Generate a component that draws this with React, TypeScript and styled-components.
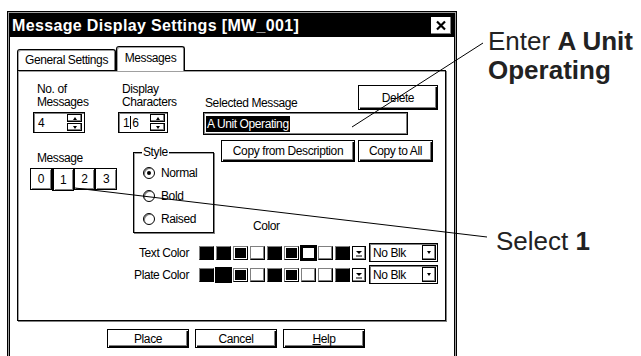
import React from "react";
import styled, { createGlobalStyle, css } from "styled-components";

const GlobalStyle = createGlobalStyle`
  html, body { margin: 0; padding: 0; background: #fff; }
  body { font-family: "Liberation Sans", Arial, sans-serif; }
  * { box-sizing: border-box; }
`;

const Page = styled.div`
  position: relative;
  width: 641px;
  height: 356px;
  overflow: hidden;
  display: flex;
  align-items: flex-start;
  background: #fff;
  color: #000;
`;

const Dialog = styled.div`
  width: 450px;
  height: 360px;
  margin: 11px 0 0 7px;
  border: 1px solid #000;
  box-shadow: inset 0 0 0 1px #a0a0a0, inset 0 0 0 2px #000;
  padding: 2px;
  display: flex;
  flex-direction: column;
  font-family: "Liberation Sans", Arial, sans-serif;
  font-size: 12px;
  letter-spacing: -0.4px;
  background: #fff;
`;

const TitleBar = styled.div`
  height: 23px;
  background: #000;
  display: flex;
  align-items: center;
  justify-content: space-between;
  padding: 0 2px;
`;

const TitleText = styled.span`
  color: #fff;
  font-size: 16px;
  font-weight: bold;
  letter-spacing: 0.35px;
  white-space: nowrap;
`;

const CloseBox = styled.div`
  width: 22px;
  height: 19px;
  background: #fff;
  border: 1px solid #000;
  box-shadow: inset -1px -1px 0 #808080;
  display: flex;
  align-items: center;
  justify-content: center;
`;

const Body = styled.div`
  display: flex;
  flex-direction: column;
  padding: 9px 8px 0 7px;
`;

const TabStrip = styled.div`
  display: flex;
  align-items: flex-end;
  height: 25px;
  margin-bottom: -1px;
  position: relative;
  z-index: 1;
`;

const Tab = styled.div<{ $active?: boolean; $width: number }>`
  width: ${(p) => p.$width}px;
  border: 1px solid #000;
  border-bottom: none;
  border-radius: 3px 3px 0 0;
  background: #fff;
  box-shadow: inset 1px 1px 0 #a0a0a0, inset -1px 0 0 #808080;
  display: flex;
  align-items: center;
  justify-content: center;
  white-space: nowrap;
  ${(p) =>
    p.$active
      ? css`
          height: 25px;
          padding-bottom: 3px;
        `
      : css`
          height: 21px;
          margin-bottom: 1px;
        `}
`;

const Panel = styled.div`
  height: 251px;
  border: 1px solid #000;
  box-shadow: inset 1px 1px 0 #a0a0a0, 1px 1px 0 #808080;
  padding: 12px 0 0 12px;
  display: flex;
  flex-direction: column;
`;

const TopRow = styled.div`
  display: flex;
  align-items: flex-start;
  padding-left: 3px;
`;

const SpinField = styled.div<{ $width: number; $gap: number }>`
  width: ${(p) => p.$width}px;
  margin-right: ${(p) => p.$gap}px;
  display: flex;
  flex-direction: column;
`;

const FieldLabel = styled.div`
  padding-left: 4px;
  line-height: 13px;
  height: 29px;
  white-space: nowrap;
`;

const SpinBox = styled.div`
  height: 21px;
  border: 1px solid #000;
  box-shadow: inset 1px 1px 0 #808080;
  display: flex;
  align-items: center;
  justify-content: space-between;
  padding: 0 2px 0 4px;
`;

const SpinValue = styled.span`
  display: flex;
  align-items: center;
`;

const Caret = styled.span`
  display: inline-block;
  width: 1px;
  height: 13px;
  background: #000;
  margin: 0 1px;
`;

const SpinButtons = styled.div`
  display: flex;
  flex-direction: column;
  gap: 1px;
`;

const SpinBtn = styled.div<{ $down?: boolean }>`
  width: 15px;
  height: 8px;
  border: 1px solid #000;
  box-shadow: inset -1px -1px 0 #808080;
  display: flex;
  align-items: center;
  justify-content: center;
  &::after {
    content: "";
    border-left: 2.5px solid transparent;
    border-right: 2.5px solid transparent;
    ${(p) =>
      p.$down
        ? css`border-top: 3px solid #000;`
        : css`border-bottom: 3px solid #000;`}
  }
`;

const MessageCol = styled.div`
  width: 235px;
  margin-top: 2px;
  display: flex;
  flex-direction: column;
`;

const MsgHeader = styled.div`
  display: flex;
  justify-content: space-between;
  align-items: flex-start;
  height: 27px;
`;

const HeaderLabel = styled.div`
  padding: 11px 0 0 2px;
  white-space: nowrap;
`;

const Button = styled.div<{ $w: number; $h: number }>`
  width: ${(p) => p.$w}px;
  height: ${(p) => p.$h}px;
  border: 1px solid #000;
  box-shadow: inset 1px 1px 0 #fff, inset -1px -1px 0 #000, inset -2px -2px 0 #808080;
  background: #fff;
  display: flex;
  align-items: center;
  justify-content: center;
  white-space: nowrap;
`;

const TextField = styled.div`
  width: 205px;
  height: 23px;
  border: 1px solid #000;
  box-shadow: inset 1px 1px 0 #808080, inset -1px -1px 0 #808080;
  padding-left: 2px;
  display: flex;
  align-items: center;
`;

const Selection = styled.span`
  background: #000;
  color: #fff;
  padding: 1px 1px;
  line-height: 14px;
  white-space: nowrap;
`;

const SecondRow = styled.div`
  display: flex;
  align-items: flex-start;
  margin-top: 5px;
`;

const MessagePicker = styled.div`
  width: 87px;
  margin: 12px 16px 0 0;
  display: flex;
  flex-direction: column;
`;

const PickerLabel = styled.div`
  padding-left: 7px;
  height: 16px;
  line-height: 12px;
`;

const IndexTabs = styled.div`
  display: flex;
  align-items: flex-start;
`;

const IndexTab = styled.div<{ $selected?: boolean }>`
  width: 22px;
  height: ${(p) => (p.$selected ? 23 : 22)}px;
  border: 1px solid #000;
  border-left-width: ${(p) => (p.$selected ? 2 : 1)}px;
  box-shadow: inset 1px 1px 0 #fff, inset -1px -1px 0 #808080;
  display: flex;
  align-items: center;
  justify-content: center;
`;

const StyleGroup = styled.div`
  position: relative;
  width: 81px;
  height: 81px;
  margin-top: 12px;
  border: 1px solid #000;
  box-shadow: inset 1px 1px 0 #a0a0a0, 1px 1px 0 #808080;
`;

const Legend = styled.span`
  position: absolute;
  top: -7px;
  left: 8px;
  background: #fff;
  padding: 0 1px;
  line-height: 13px;
`;

const RadioList = styled.div`
  display: flex;
  flex-direction: column;
  gap: 11px;
  padding: 14px 0 0 9px;
`;

const RadioItem = styled.div`
  display: flex;
  align-items: center;
  gap: 6px;
  height: 12px;
`;

const RadioDot = styled.span<{ $on?: boolean }>`
  position: relative;
  width: 12px;
  height: 12px;
  border-radius: 50%;
  border: 1.5px solid #000;
  box-shadow: inset 1px 1px 0 #808080;
  flex: none;
  ${(p) =>
    p.$on &&
    css`
      &::after {
        content: "";
        position: absolute;
        left: 2.5px;
        top: 2.5px;
        width: 4px;
        height: 4px;
        border-radius: 50%;
        background: #000;
      }
    `}
`;

const RightCol = styled.div`
  width: 224px;
  height: 93px;
  display: flex;
  flex-direction: column;
`;

const CopyRow = styled.div`
  display: flex;
  gap: 3px;
  padding-left: 7px;
`;

const ColorTitle = styled.div`
  margin-top: auto;
  padding: 0 0 1px 39px;
  line-height: 12px;
`;

const ColorSection = styled.div`
  display: flex;
  flex-direction: column;
  gap: 3px;
  margin-top: 10px;
`;

const ColorRow = styled.div`
  display: flex;
  align-items: center;
  height: 19px;
`;

const ColorLabel = styled.div`
  width: 159px;
  text-align: right;
  margin-right: 10px;
  white-space: nowrap;
`;

const SwatchStrip = styled.div`
  display: flex;
  gap: 2px;
`;

type Kind = "k" | "d" | "w";

const Swatch = styled.div<{ $kind: Kind; $sel?: boolean }>`
  width: 15px;
  height: 14px;
  border: 1px solid #000;
  border-color: #808080 #000 #000 #808080;
  background: ${(p) => (p.$kind === "w" ? "#fff" : "#000")};
  ${(p) => p.$kind === "d" && css`box-shadow: inset 0 0 0 1px #fff;`}
  ${(p) => p.$kind === "w" && css`box-shadow: inset -1px -1px 0 #808080;`}
  ${(p) =>
    p.$sel &&
    css`
      border: 2px solid #000;
      outline: 1px solid #000;
      box-shadow: none;
    `}
`;

const ArrowSwatch = styled.div`
  width: 14px;
  height: 14px;
  border: 1px solid #000;
  box-shadow: inset -1px -1px 0 #808080;
  display: flex;
  align-items: center;
  justify-content: center;
`;

const Combo = styled.div`
  margin-left: 3px;
  width: 69px;
  height: 19px;
  border: 1px solid #000;
  box-shadow: inset 1px 1px 0 #808080;
  display: flex;
  align-items: center;
  justify-content: space-between;
  padding: 0 1px 0 3px;
`;

const ComboBtn = styled.div`
  width: 14px;
  height: 15px;
  border: 1px solid #000;
  box-shadow: inset -1px -1px 0 #808080;
  display: flex;
  align-items: center;
  justify-content: center;
  &::after {
    content: "";
    border-left: 2.5px solid transparent;
    border-right: 2.5px solid transparent;
    border-top: 3px solid #000;
  }
`;

const ButtonRow = styled.div`
  display: flex;
  gap: 6px;
  margin-top: 8px;
  padding-left: 90px;
`;

const Underline = styled.span`
  text-decoration: underline;
`;

const Notes = styled.div`
  display: flex;
  flex-direction: column;
  margin-left: 31px;
  padding-top: 27px;
  font-family: "Liberation Sans", Arial, Helvetica, sans-serif;
  font-size: 26px;
  line-height: 29px;
  color: #222;
  white-space: nowrap;
`;

const Note = styled.div<{ $gap?: number; $indent?: number }>`
  margin-top: ${(p) => p.$gap ?? 0}px;
  padding-left: ${(p) => p.$indent ?? 0}px;
`;

const Strong = styled.b`
  font-weight: bold;
`;

const Leaders = styled.svg`
  position: absolute;
  left: 0;
  top: 0;
  width: 641px;
  height: 356px;
  pointer-events: none;
`;

const textSwatches: { k: Kind; s?: boolean }[] = [
  { k: "k" }, { k: "k" }, { k: "d" }, { k: "w" }, { k: "k" },
  { k: "d" }, { k: "w", s: true }, { k: "w" }, { k: "k" },
];
const plateSwatches: { k: Kind; s?: boolean }[] = [
  { k: "k" }, { k: "k", s: true }, { k: "d" }, { k: "w" }, { k: "k" },
  { k: "d" }, { k: "w" }, { k: "w" }, { k: "k" },
];

const ArrowGlyph = () => (
  <svg width="8" height="8" viewBox="0 0 8 8">
    <path d="M1 2 H7 L4 5 Z" fill="#000" />
    <path d="M1 7 H7" stroke="#000" strokeWidth="1" />
  </svg>
);

const ColorLine = ({ label, items }: { label: string; items: { k: Kind; s?: boolean }[] }) => (
  <ColorRow>
    <ColorLabel>{label}</ColorLabel>
    <SwatchStrip>
      {items.map((it, i) => (
        <Swatch key={i} $kind={it.k} $sel={it.s} />
      ))}
      <ArrowSwatch>
        <ArrowGlyph />
      </ArrowSwatch>
    </SwatchStrip>
    <Combo>
      <span>No Blk</span>
      <ComboBtn />
    </Combo>
  </ColorRow>
);

export default function App() {
  return (
    <>
      <GlobalStyle />
      <Page>
        <Dialog>
          <TitleBar>
            <TitleText>Message Display Settings [MW_001]</TitleText>
            <CloseBox>
              <svg width="12" height="11" viewBox="0 0 12 11">
                <path d="M2 1.5 L10 9.5 M10 1.5 L2 9.5" stroke="#000" strokeWidth="2.2" />
              </svg>
            </CloseBox>
          </TitleBar>
          <Body>
            <TabStrip>
              <Tab $width={99}>General Settings</Tab>
              <Tab $width={69} $active>Messages</Tab>
            </TabStrip>
            <Panel>
              <TopRow>
                <SpinField $width={52} $gap={33}>
                  <FieldLabel>
                    No. of
                    <br />
                    Messages
                  </FieldLabel>
                  <SpinBox>
                    <SpinValue>4</SpinValue>
                    <SpinButtons>
                      <SpinBtn />
                      <SpinBtn $down />
                    </SpinButtons>
                  </SpinBox>
                </SpinField>
                <SpinField $width={50} $gap={35}>
                  <FieldLabel>
                    Display
                    <br />
                    Characters
                  </FieldLabel>
                  <SpinBox>
                    <SpinValue>
                      1<Caret />6
                    </SpinValue>
                    <SpinButtons>
                      <SpinBtn />
                      <SpinBtn $down />
                    </SpinButtons>
                  </SpinBox>
                </SpinField>
                <MessageCol>
                  <MsgHeader>
                    <HeaderLabel>Selected Message</HeaderLabel>
                    <Button $w={80} $h={25}>Delete</Button>
                  </MsgHeader>
                  <TextField>
                    <Selection>A Unit Operating</Selection>
                  </TextField>
                </MessageCol>
              </TopRow>
              <SecondRow>
                <MessagePicker>
                  <PickerLabel>Message</PickerLabel>
                  <IndexTabs>
                    <IndexTab>0</IndexTab>
                    <IndexTab $selected>1</IndexTab>
                    <IndexTab>2</IndexTab>
                    <IndexTab>3</IndexTab>
                  </IndexTabs>
                </MessagePicker>
                <StyleGroup>
                  <Legend>Style</Legend>
                  <RadioList>
                    <RadioItem>
                      <RadioDot $on />
                      Normal
                    </RadioItem>
                    <RadioItem>
                      <RadioDot />
                      Bold
                    </RadioItem>
                    <RadioItem>
                      <RadioDot />
                      Raised
                    </RadioItem>
                  </RadioList>
                </StyleGroup>
                <RightCol>
                  <CopyRow>
                    <Button $w={134} $h={22}>Copy from Description</Button>
                    <Button $w={75} $h={22}>Copy to All</Button>
                  </CopyRow>
                  <ColorTitle>Color</ColorTitle>
                </RightCol>
              </SecondRow>
              <ColorSection>
                <ColorLine label="Text Color" items={textSwatches} />
                <ColorLine label="Plate Color" items={plateSwatches} />
              </ColorSection>
            </Panel>
            <ButtonRow>
              <Button $w={82} $h={19}>Place</Button>
              <Button $w={82} $h={19}>Cancel</Button>
              <Button $w={82} $h={19}>
                <Underline>H</Underline>elp
              </Button>
            </ButtonRow>
          </Body>
        </Dialog>
        <Notes>
          <Note>
            Enter <Strong>A Unit</Strong>
            <br />
            <Strong>Operating</Strong>
          </Note>
          <Note $gap={142} $indent={8}>
            Select <Strong>1</Strong>
          </Note>
        </Notes>
        <Leaders viewBox="0 0 641 356">
          <path d="M483 43 L352 127" stroke="#000" strokeWidth="1" fill="none" />
          <path d="M75 188 L487 237" stroke="#000" strokeWidth="1" fill="none" />
        </Leaders>
      </Page>
    </>
  );
}
